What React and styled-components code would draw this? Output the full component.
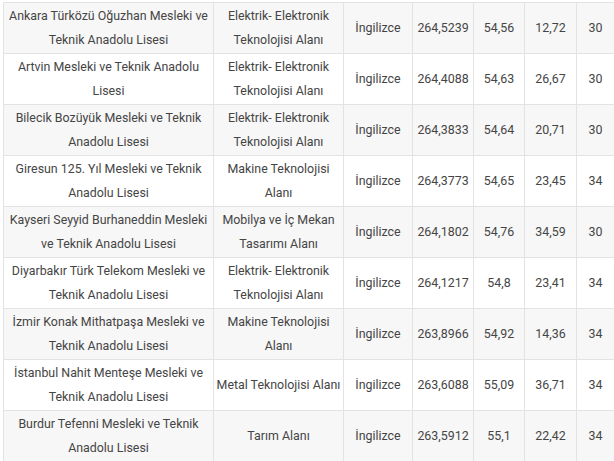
import React from "react";
import styled, { createGlobalStyle } from "styled-components";

const GlobalStyle = createGlobalStyle`
  html, body {
    margin: 0;
    padding: 0;
    background: #ffffff;
    overflow: hidden;
  }
  body {
    font-family: Roboto, "Liberation Sans", sans-serif;
  }
`;

const widths = [210, 130, 69, 61, 51, 52, 38];
const total = widths.reduce((a, b) => a + b, 0);

const Page = styled.div`
  padding: 2px 0 0 3px;
  width: 620px;
`;

const Table = styled.table`
  border-collapse: collapse;
  table-layout: fixed;
  width: ${total}px;
  font-family: Roboto, "Liberation Sans", sans-serif;
  font-size: 12.4px;
  color: #454545;
`;

const Col = styled.col`
  width: ${(p) => p.$w}px;
`;

const Row = styled.tr`
  background: ${(p) => (p.$shaded ? "#f7f7f7" : "#ffffff")};
`;

const Cell = styled.td`
  border: 1px solid #e3e3e3;
  height: 48px;
  padding: 1px 2px;
  line-height: 24px;
  text-align: center;
  vertical-align: middle;
  white-space: nowrap;
  overflow: hidden;
`;

const rows = [
  [["Ankara Türközü Oğuzhan Mesleki ve", "Teknik Anadolu Lisesi"], ["Elektrik- Elektronik", "Teknolojisi Alanı"], "264,5239", "54,56", "12,72", "30"],
  [["Artvin Mesleki ve Teknik Anadolu", "Lisesi"], ["Elektrik- Elektronik", "Teknolojisi Alanı"], "264,4088", "54,63", "26,67", "30"],
  [["Bilecik Bozüyük Mesleki ve Teknik", "Anadolu Lisesi"], ["Elektrik- Elektronik", "Teknolojisi Alanı"], "264,3833", "54,64", "20,71", "30"],
  [["Giresun 125. Yıl Mesleki ve Teknik", "Anadolu Lisesi"], ["Makine Teknolojisi", "Alanı"], "264,3773", "54,65", "23,45", "34"],
  [["Kayseri Seyyid Burhaneddin Mesleki", "ve Teknik Anadolu Lisesi"], ["Mobilya ve İç Mekan", "Tasarımı Alanı"], "264,1802", "54,76", "34,59", "30"],
  [["Diyarbakır Türk Telekom Mesleki ve", "Teknik Anadolu Lisesi"], ["Elektrik- Elektronik", "Teknolojisi Alanı"], "264,1217", "54,8", "23,41", "34"],
  [["İzmir Konak Mithatpaşa Mesleki ve", "Teknik Anadolu Lisesi"], ["Makine Teknolojisi", "Alanı"], "263,8966", "54,92", "14,36", "34"],
  [["İstanbul Nahit Menteşe Mesleki ve", "Teknik Anadolu Lisesi"], ["Metal Teknolojisi Alanı"], "263,6088", "55,09", "36,71", "34"],
  [["Burdur Tefenni Mesleki ve Teknik", "Anadolu Lisesi"], ["Tarım Alanı"], "263,5912", "55,1", "22,42", "34"],
];

const Lines = ({ lines }) =>
  lines.map((l, i) => (
    <React.Fragment key={i}>
      {i > 0 && <br />}
      {l}
    </React.Fragment>
  ));

export default function App() {
  return (
    <>
      <GlobalStyle />
      <Page>
        <Table>
          <colgroup>
            {widths.map((w, i) => (
              <Col key={i} $w={w} />
            ))}
          </colgroup>
          <tbody>
            {rows.map((r, i) => (
              <Row key={i} $shaded={i % 2 === 0}>
                <Cell>
                  <Lines lines={r[0]} />
                </Cell>
                <Cell>
                  <Lines lines={r[1]} />
                </Cell>
                <Cell>İngilizce</Cell>
                <Cell>{r[2]}</Cell>
                <Cell>{r[3]}</Cell>
                <Cell>{r[4]}</Cell>
                <Cell>{r[5]}</Cell>
              </Row>
            ))}
          </tbody>
        </Table>
      </Page>
    </>
  );
}
